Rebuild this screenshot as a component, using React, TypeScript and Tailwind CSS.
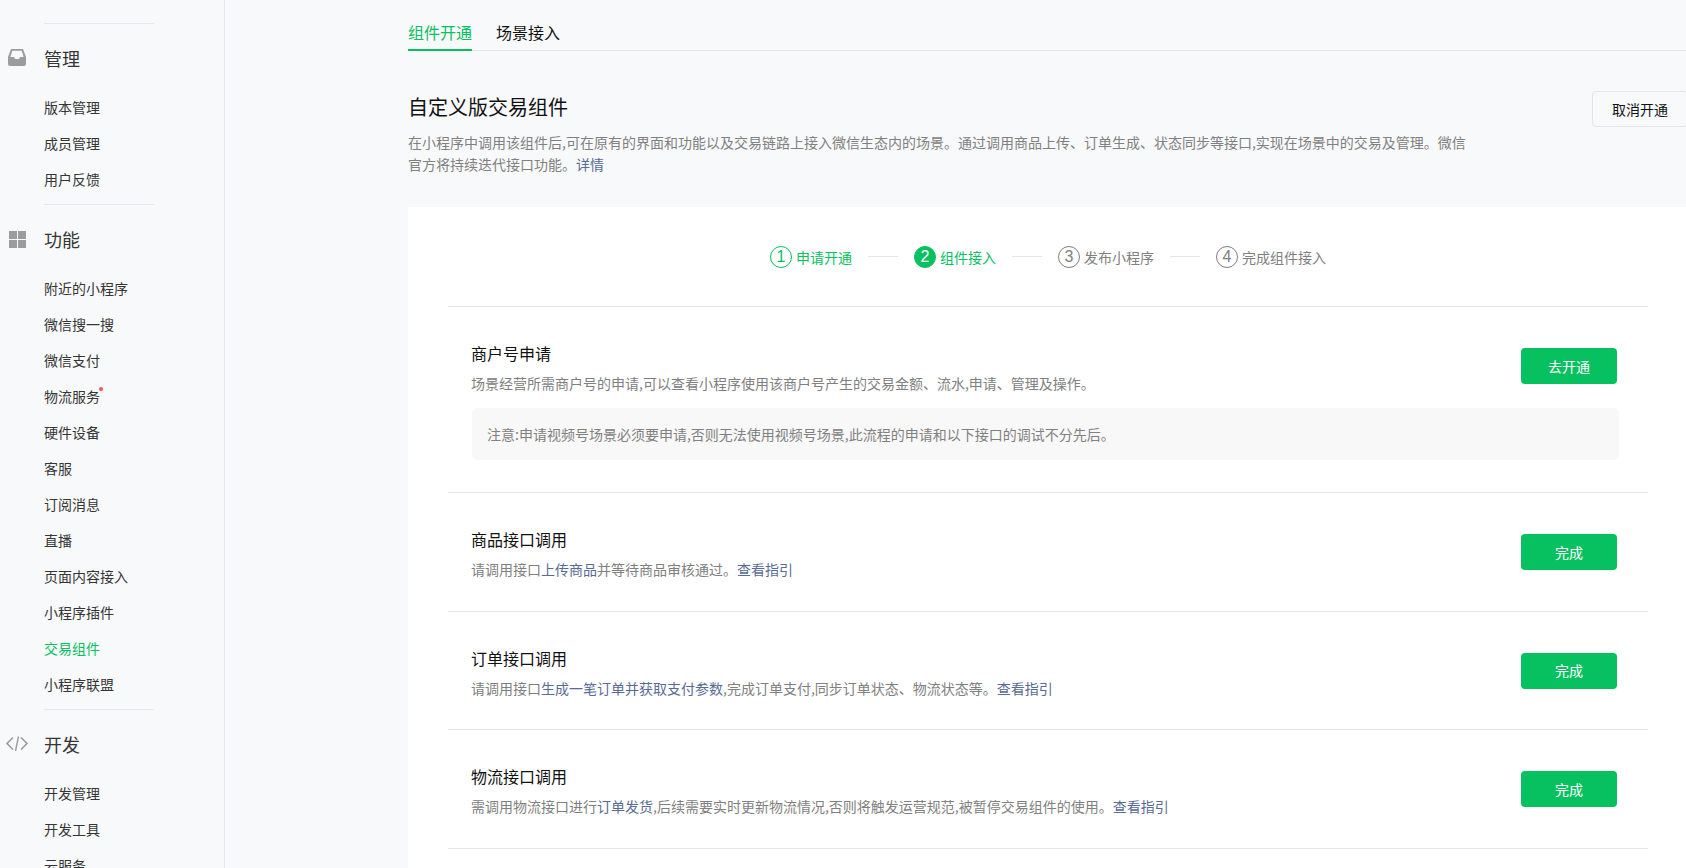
import React from "react";

const font = '"Noto Sans CJK SC", "Liberation Sans", sans-serif';

function InboxIcon() {
  return (
    <svg width="18" height="17" viewBox="0 0 18 17" className="absolute left-[8px] top-[9px]">
      <path
        fill="#9c9c9c"
        fillRule="evenodd"
        d="M3 0H15L18 8V15a2 2 0 0 1-2 2H2a2 2 0 0 1-2-2V8ZM4.3 1.7 2.4 8H6L7 10H11L12 8H15.6L13.7 1.7Z"
      />
    </svg>
  );
}

function GridIcon() {
  return (
    <svg width="17" height="17" viewBox="0 0 17 17" className="absolute left-[9px] top-[10px]">
      <rect x="0" y="0" width="8" height="8" fill="#9c9c9c" />
      <rect x="9" y="0" width="8" height="8" fill="#9c9c9c" />
      <rect x="0" y="9" width="8" height="8" fill="#9c9c9c" />
      <rect x="9" y="9" width="8" height="8" fill="#9c9c9c" />
    </svg>
  );
}

function CodeIcon() {
  return (
    <svg width="24" height="18" viewBox="0 0 24 18" fill="none" className="absolute left-[5px] top-[9px]">
      <path d="M8 2.5 2 8.5 8 14.5" stroke="#9c9c9c" strokeWidth="1.6" />
      <path d="M16 2.5 22 8.5 16 14.5" stroke="#9c9c9c" strokeWidth="1.6" />
      <path d="M13.5 1.5 10.5 16" stroke="#9c9c9c" strokeWidth="1.4" />
    </svg>
  );
}

type NavItem = { label: string; active?: boolean; dot?: boolean };

function NavGroup({ title, icon, items }: { title: string; icon: React.ReactNode; items: NavItem[] }) {
  return (
    <div>
      <div className="ml-[44px] h-px w-[110px] bg-[#e7e7eb]" />
      <div className="relative mt-[16px] h-[36px] pl-[44px] text-[18px] leading-[36px] text-[#353535]">
        {icon}
        {title}
      </div>
      <ul className="mt-[13px] mb-[7px]">
        {items.map((item) => (
          <li
            key={item.label}
            className={`h-[36px] pl-[44px] text-[14px] leading-[36px] ${item.active ? "text-[#07c160]" : "text-[#353535]"}`}
          >
            <span className="relative inline-block">
              {item.label}
              {item.dot && (
                <span className="absolute right-[-3px] top-[9px] h-[4px] w-[4px] rounded-full bg-[#fa5151]" />
              )}
            </span>
          </li>
        ))}
      </ul>
    </div>
  );
}

function Step({ n, label, state }: { n: number; label: string; state: "done" | "current" | "todo" }) {
  const circle =
    state === "done"
      ? "border border-[#07c160] text-[#07c160]"
      : state === "current"
        ? "border border-[#07c160] bg-[#07c160] text-white"
        : "border border-[#808080] text-[#808080]";
  const text = state === "todo" ? "text-[#808080]" : "text-[#07c160]";
  return (
    <div className="flex items-center gap-[4px]">
      <span
        className={`flex h-[22px] w-[22px] items-center justify-center rounded-full text-[16px] leading-none ${circle}`}
        style={{ fontFamily: '"Liberation Sans", sans-serif' }}
      >
        {n}
      </span>
      <span className={`text-[14px] leading-[22px] ${text}`}>{label}</span>
    </div>
  );
}

function StepLine() {
  return <span className="mx-[16px] h-px w-[30px] bg-[#e5e5e5]" />;
}

function Row({
  title,
  action,
  children,
  note,
}: {
  title: string;
  action: string;
  children: React.ReactNode;
  note?: string;
}) {
  return (
    <section className={`border-b border-[#e5e5e5] pr-[31px] pl-[23px] ${note ? "pb-[32px]" : "pb-[30.67px]"}`}>
      <div className="flex items-start justify-between">
        <div className="pt-[35px]">
          <h3 className="text-[16px] leading-[22px] font-normal text-[#111111]">{title}</h3>
          <p className="mt-[8px] text-[14px] leading-[22px] text-[#808080]">{children}</p>
        </div>
        <button className="mt-[41px] h-[36px] w-[96px] rounded-[4px] bg-[#07c160] text-[14px] text-white">
          {action}
        </button>
      </div>
      {note && (
        <div className="mt-[14px] ml-px h-[52px] w-[1147px] rounded-[6px] bg-[#f8f8f8] pl-[15px] text-[14px] leading-[52px] text-[#808080]">
          {note}
        </div>
      )}
    </section>
  );
}

function Link({ children }: { children: React.ReactNode }) {
  return <a className="text-[#576b95]">{children}</a>;
}

export default function App() {
  return (
    <div className="flex h-[868px] w-full overflow-hidden bg-[#f8f9fb]" style={{ fontFamily: font }}>
      <aside className="h-full w-[225px] shrink-0 overflow-hidden border-r border-[#e7e7eb] pt-[23px]">
        <NavGroup
          title="管理"
          icon={<InboxIcon />}
          items={[{ label: "版本管理" }, { label: "成员管理" }, { label: "用户反馈" }]}
        />
        <NavGroup
          title="功能"
          icon={<GridIcon />}
          items={[
            { label: "附近的小程序" },
            { label: "微信搜一搜" },
            { label: "微信支付" },
            { label: "物流服务", dot: true },
            { label: "硬件设备" },
            { label: "客服" },
            { label: "订阅消息" },
            { label: "直播" },
            { label: "页面内容接入" },
            { label: "小程序插件" },
            { label: "交易组件", active: true },
            { label: "小程序联盟" },
          ]}
        />
        <NavGroup
          title="开发"
          icon={<CodeIcon />}
          items={[{ label: "开发管理" }, { label: "开发工具" }, { label: "云服务" }]}
        />
      </aside>

      <main className="ml-[183px] w-[1280px] shrink-0">
        <div className="flex h-[51px] items-end gap-[24px] border-b border-[#e5e5e5]">
          <div className="-mb-px h-[31px] border-b-2 border-[#07c160] text-[16px] leading-[24px] text-[#07c160]">
            组件开通
          </div>
          <div className="-mb-px h-[31px] text-[16px] leading-[24px] text-[#111111]">场景接入</div>
        </div>

        <div className="flex items-start justify-between pt-[40px]">
          <div className="pt-[2px]">
            <h1 className="text-[20px] leading-[28px] font-normal text-[#111111]">自定义版交易组件</h1>
            <p className="mt-[10px] w-[1068px] text-[14px] leading-[22px] text-[#808080]">
              在小程序中调用该组件后,可在原有的界面和功能以及交易链路上接入微信生态内的场景。通过调用商品上传、订单生成、状态同步等接口,实现在场景中的交易及管理。微信官方将持续迭代接口功能。
              <Link>详情</Link>
            </p>
          </div>
          <button className="h-[36px] w-[96px] shrink-0 rounded-[4px] border border-[#e5e5e5] bg-[#f8f9fb] text-[14px] text-[#111111]">
            取消开通
          </button>
        </div>

        <div className="mt-[32px] h-[700px] bg-white px-[40px]">
          <div className="flex h-[100px] items-center justify-center border-b border-[#e5e5e5]">
            <Step n={1} label="申请开通" state="done" />
            <StepLine />
            <Step n={2} label="组件接入" state="current" />
            <StepLine />
            <Step n={3} label="发布小程序" state="todo" />
            <StepLine />
            <Step n={4} label="完成组件接入" state="todo" />
          </div>

          <Row
            title="商户号申请"
            action="去开通"
            note="注意:申请视频号场景必须要申请,否则无法使用视频号场景,此流程的申请和以下接口的调试不分先后。"
          >
            场景经营所需商户号的申请,可以查看小程序使用该商户号产生的交易金额、流水,申请、管理及操作。
          </Row>
          <Row title="商品接口调用" action="完成">
            请调用接口<Link>上传商品</Link>并等待商品审核通过。<Link>查看指引</Link>
          </Row>
          <Row title="订单接口调用" action="完成">
            请调用接口<Link>生成一笔订单并获取支付参数</Link>,完成订单支付,同步订单状态、物流状态等。
            <Link>查看指引</Link>
          </Row>
          <Row title="物流接口调用" action="完成">
            需调用物流接口进行<Link>订单发货</Link>,后续需要实时更新物流情况,否则将触发运营规范,被暂停交易组件的使用。
            <Link>查看指引</Link>
          </Row>
        </div>
      </main>
    </div>
  );
}
